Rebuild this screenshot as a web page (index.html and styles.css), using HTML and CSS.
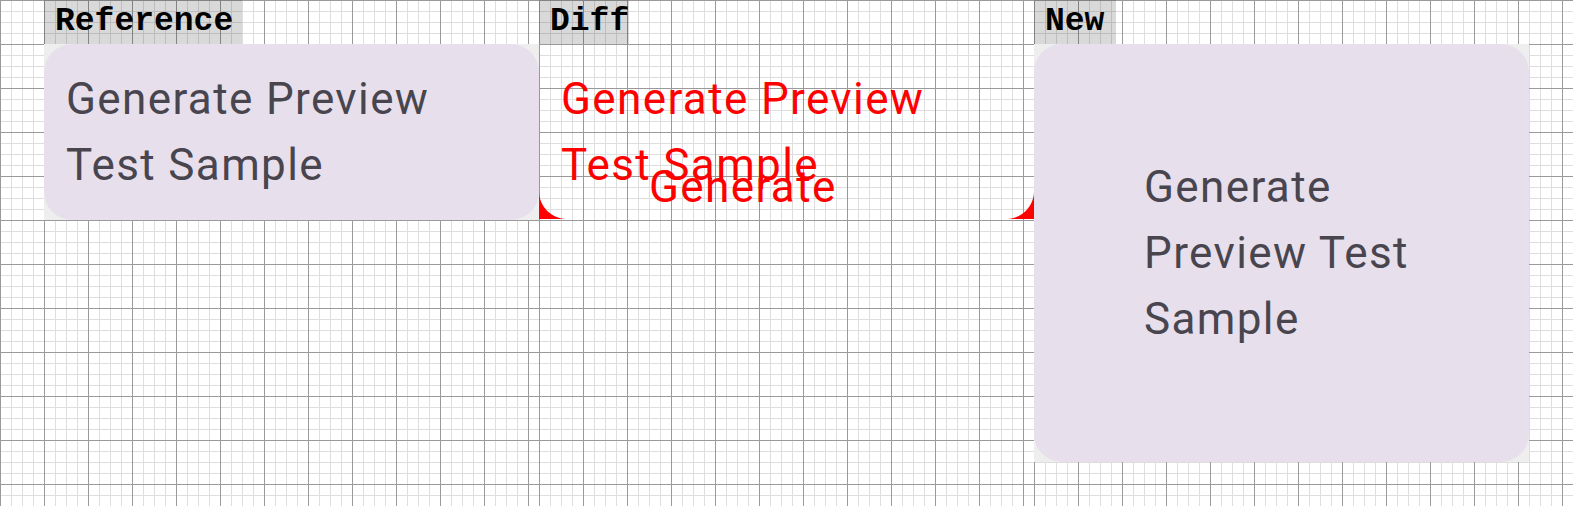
FILE: index.html
```html
<!DOCTYPE html>
<html>
<head>
<meta charset="utf-8">
<link rel="stylesheet" href="styles.css">
</head>
<body>
  <div class="page">
    <section class="column">
      <div class="label label-ref">Reference</div>
      <div class="frame">
        <div class="card card-ref">Generate Preview Test Sample</div>
      </div>
    </section>
    <section class="column">
      <div class="label label-diff">Diff</div>
      <div class="diff">
        <div class="diff-text">Generate Preview Test Sample</div>
        <div class="diff-new">Generate</div>
        <div class="corner corner-bl"></div>
        <div class="corner corner-br"></div>
      </div>
    </section>
    <section class="column column-last">
      <div class="label label-new">New</div>
      <div class="frame">
        <div class="card card-new">Generate Preview Test Sample</div>
      </div>
    </section>
  </div>
</body>
</html>
```

FILE: styles.css
```css
html, body {
  margin: 0;
  padding: 0;
}

body {
  width: 1573px;
  height: 506px;
  overflow: hidden;
  background-color: #ffffff;
  background-image:
    linear-gradient(to right, #9a9a9a 1px, transparent 1px),
    linear-gradient(to bottom, #9a9a9a 1px, transparent 1px),
    linear-gradient(to right, #dedede 1px, transparent 1px),
    linear-gradient(to bottom, #dedede 1px, transparent 1px);
  background-size: 44px 44px, 44px 44px, 11px 11px, 11px 11px;
}

.page {
  display: flex;
  padding-left: 44px;
  height: 506px;
}

.column {
  width: 495px;
  flex: none;
  height: 506px;
  display: flex;
  flex-direction: column;
  align-items: flex-start;
  background-color: #ffffff;
  background-image:
    linear-gradient(to right, #9a9a9a 1px, transparent 1px),
    linear-gradient(to bottom, #9a9a9a 1px, transparent 1px),
    linear-gradient(to right, #dedede 1px, transparent 1px),
    linear-gradient(to bottom, #dedede 1px, transparent 1px);
  background-size: 44px 44px, 44px 44px, 11px 11px, 11px 11px;
}

.column-last {
  flex: 1;
  width: auto;
}

.label {
  box-sizing: border-box;
  height: 44px;
  padding-left: 11px;
  font-family: "Liberation Mono", "Courier New", monospace;
  font-weight: bold;
  font-size: 33px;
  line-height: 44px;
  color: #000000;
  background: rgba(0, 0, 0, 0.15);
  white-space: nowrap;
  overflow: hidden;
}

.label-ref { width: 198px; }
.label-diff { width: 90px; }
.label-new { width: 82px; }

.frame {
  width: 495px;
  background: #eeeeee;
}

.card {
  box-sizing: border-box;
  width: 495px;
  background: #e7e0ec;
  border-radius: 28px;
  color: #49454f;
  font-family: Roboto, "Noto Sans", sans-serif;
  font-size: 44px;
  line-height: 66px;
  letter-spacing: 1.375px;
}

.card-ref {
  padding: 22px;
}

.card-new {
  padding: 110px;
}

.diff {
  position: relative;
  width: 495px;
  height: 175px;
  overflow: hidden;
}

.diff-text {
  padding: 22px;
  color: #ff0000;
  font-family: Roboto, "Noto Sans", sans-serif;
  font-size: 44px;
  line-height: 66px;
  letter-spacing: 1.375px;
}

.diff-new {
  position: absolute;
  left: 110px;
  top: 110px;
  color: #ff0000;
  font-family: Roboto, "Noto Sans", sans-serif;
  font-size: 44px;
  line-height: 66px;
  letter-spacing: 1.375px;
}

.corner {
  position: absolute;
  bottom: 0;
  width: 28px;
  height: 28px;
}

.corner-bl {
  left: 0;
  background: radial-gradient(circle at 100% 0, transparent 27.5px, #ff0000 28.5px);
}

.corner-br {
  right: 0;
  background: radial-gradient(circle at 0 0, transparent 27.5px, #ff0000 28.5px);
}
```
